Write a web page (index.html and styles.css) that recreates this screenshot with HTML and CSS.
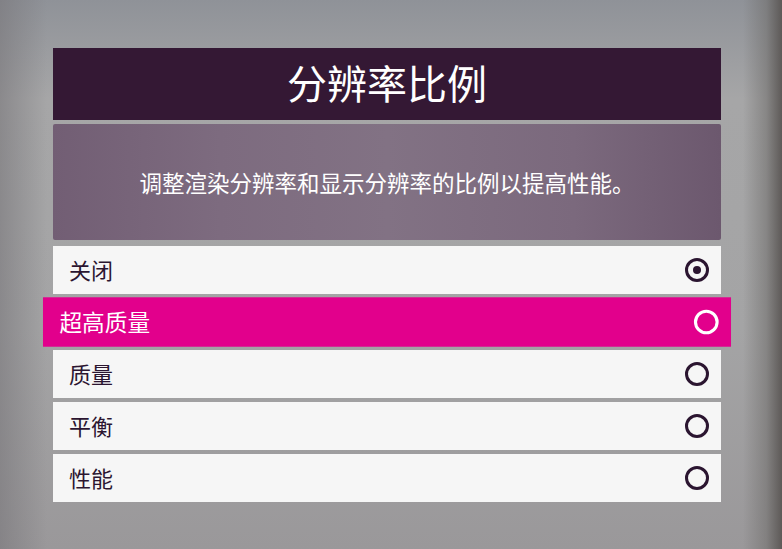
FILE: index.html
```html
<!DOCTYPE html>
<html lang="zh-CN">
<head>
  <meta charset="UTF-8" />
  <meta name="viewport" content="width=device-width, initial-scale=1.0" />
  <title>分辨率比例</title>
  <link rel="stylesheet" href="styles.css">
</head>

<body>
  <div class="panel">
    <!-- Header -->
    <h1 class="panel-title">分辨率比例</h1>

    <!-- Description -->
    <div class="panel-desc">调整渲染分辨率和显示分辨率的比例以提高性能。</div>

    <!-- Options -->
    <ul class="options">
      <li class="option"><span class="label">关闭</span><span class="radio checked"></span></li>
      <li class="option focused"><span class="label">超高质量</span><span class="radio"></span></li>
      <li class="option"><span class="label">质量</span><span class="radio"></span></li>
      <li class="option"><span class="label">平衡</span><span class="radio"></span></li>
      <li class="option"><span class="label">性能</span><span class="radio"></span></li>
    </ul>
  </div>
</body>
</html>
```

FILE: styles.css
```css
html, body {
  height: 100%;
}

body {
  margin: 0;
  padding-top: 48px;
  box-sizing: border-box;
  font-family: "Noto Sans CJK SC", "Noto Sans", sans-serif;
  overflow: hidden;
  background:
    linear-gradient(90deg, rgba(120, 118, 122, 0.6) 0%, rgba(150, 150, 152, 0) 6%, rgba(160, 160, 160, 0) 95%, rgba(110, 108, 106, 0.55) 98%, rgba(90, 86, 84, 0.95) 100%),
    linear-gradient(180deg, #8f9298 0%, #a6a6a7 18%, #a4a4a5 60%, #9a989a 100%);
}

.panel {
  width: 668px;
  margin-left: 53px;
}

.panel-title {
  margin: 0;
  height: 72px;
  box-sizing: border-box;
  padding-bottom: 4px;
  background-color: #341834;
  color: #ffffff;
  font-size: 40px;
  font-weight: 400;
  line-height: 68px;
  text-align: center;
}

.panel-desc {
  margin-top: 4px;
  height: 116px;
  display: flex;
  align-items: center;
  justify-content: center;
  border-radius: 2px;
  background: linear-gradient(90deg, #725e74 0%, #7d6b7f 25%, #827284 50%, #7b697d 78%, #6c586e 100%);
  color: #ffffff;
  font-size: 22.5px;
}

.options {
  list-style: none;
  margin: 6px 0 0;
  padding: 0;
  display: flex;
  flex-direction: column;
  gap: 4px;
}

.option {
  height: 48px;
  display: flex;
  align-items: center;
  justify-content: space-between;
  padding: 0 12px 0 16px;
  background-color: #f6f6f6;
  color: #2b1530;
  font-size: 22px;
}

.label {
  padding-bottom: 3px;
}

.option.focused {
  background-color: #e2008c;
  color: #ffffff;
  transform: scale(1.03);
}

.radio {
  width: 24px;
  height: 24px;
  box-sizing: border-box;
  border: 3px solid #2b1530;
  border-radius: 50%;
  display: flex;
  align-items: center;
  justify-content: center;
}

.option.focused .radio {
  border-color: #ffffff;
}

.radio.checked::after {
  content: "";
  width: 8px;
  height: 8px;
  border-radius: 50%;
  background-color: #2b1530;
}
```
